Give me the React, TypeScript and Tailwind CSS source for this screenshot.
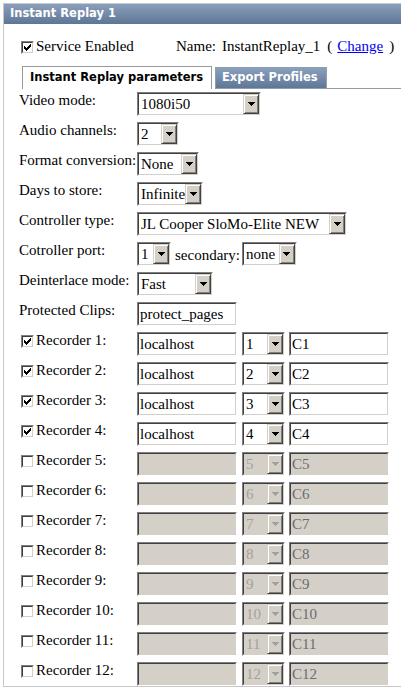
import type { ReactNode } from "react";

// classic windows-style form controls
function Inset({ w, disabled, children }: { w: string; disabled?: boolean; children?: ReactNode }) {
  return (
    <div className={`h-[24px] shrink-0 border border-t-[#808080] border-l-[#808080] border-r-white border-b-white ${w}`}>
      <div
        className={`flex h-full border border-t-[#404040] border-l-[#404040] border-r-[#d4d0c8] border-b-[#d4d0c8] ${
          disabled ? "bg-[#d4d0c8]" : "bg-white"
        }`}
      >
        {children}
      </div>
    </div>
  );
}

function DropButton({ disabled }: { disabled?: boolean }) {
  return (
    <div className="flex h-full w-[16px] shrink-0 items-center justify-center border border-t-[#d4d0c8] border-l-[#d4d0c8] border-r-[#404040] border-b-[#404040] bg-[#d4d0c8] shadow-[inset_1px_1px_0_#ffffff,inset_-1px_-1px_0_#808080]">
      <svg width="7" height="4" viewBox="0 0 7 4" shapeRendering="crispEdges">
        <path d="M0 0h7v1H0zM1 1h5v1H1zM2 2h3v1H2zM3 3h1v1H3z" fill={disabled ? "#a0a0a0" : "#000000"} />
      </svg>
    </div>
  );
}

function Select({ w, value, disabled }: { w: string; value: string; disabled?: boolean }) {
  return (
    <Inset w={w} disabled={disabled}>
      <span
        className={`flex-1 overflow-hidden whitespace-nowrap pl-[2px] pt-px leading-[19px] ${
          disabled ? "text-[#a3a29c]" : "text-black"
        }`}
      >
        {value}
      </span>
      <DropButton disabled={disabled} />
    </Inset>
  );
}

function TextInput({ w, value, disabled }: { w: string; value: string; disabled?: boolean }) {
  return (
    <Inset w={w} disabled={disabled}>
      <span
        className={`flex-1 overflow-hidden whitespace-nowrap pl-px pt-px leading-[19px] ${
          disabled ? "text-[#6b6b73]" : "text-black"
        }`}
      >
        {value}
      </span>
    </Inset>
  );
}

function Check({ checked }: { checked?: boolean }) {
  return (
    <div className="ml-[2px] mt-[3px] h-[13px] w-[13px] shrink-0 border border-t-[#808080] border-l-[#808080] border-r-white border-b-white">
      <div className="flex h-full w-full items-center justify-center border border-t-[#404040] border-l-[#404040] border-r-[#d4d0c8] border-b-[#d4d0c8] bg-white">
        {checked && (
          <svg width="7" height="7" viewBox="0 0 7 7" shapeRendering="crispEdges">
            <path
              d="M6 0h1v1H6zM5 1h2v1H5zM0 2h1v1H0zM4 2h3v1H4zM0 3h2v1H0zM3 3h3v1H3zM0 4h5v1H0zM1 5h3v1H1zM2 6h1v1H2z"
              fill="#000000"
            />
          </svg>
        )}
      </div>
    </div>
  );
}

function Row({ label, children }: { label: ReactNode; children: ReactNode }) {
  return (
    <div className="flex h-[24px] items-start">
      <div className="flex w-[118px] shrink-0 items-start whitespace-nowrap leading-[16px]">{label}</div>
      <div className="flex items-start">{children}</div>
    </div>
  );
}

const RECORDERS = Array.from({ length: 12 }, (_, i) => i + 1);

export default function App() {
  return (
    <div className="min-h-[689px] bg-white pl-[3px] pt-[3px] font-['Liberation_Serif','Times_New_Roman',serif] text-[15px] text-black">
      <div className="border-t border-l border-b border-[#c8c8c8]">
        {/* Title bar */}
        <div className="flex h-[20px] items-center bg-linear-to-b from-[#8a9fbb] to-[#5e7696] pl-[6px] font-['DejaVu_Sans',Verdana,sans-serif] text-[11.5px] font-bold text-white">
          Instant Replay 1
        </div>

        {/* Service row */}
        <div className="mt-[14px] flex items-start pl-[15px] leading-[16px]">
          <div className="flex w-[157px] shrink-0 items-start">
            <Check checked />
            <span className="ml-[2px]">Service Enabled</span>
          </div>
          <div className="flex items-start whitespace-nowrap">
            <span>Name:</span>
            <span className="ml-[6px]">InstantReplay_1</span>
            <span className="ml-[7px]">(</span>
            <a href="#" className="ml-[5px] text-[#0000ee] underline">
              Change
            </a>
            <span className="ml-[6px]">)</span>
          </div>
        </div>

        {/* Tabs */}
        <div className="mt-[12px] flex items-end pl-[18px] font-['DejaVu_Sans',Verdana,sans-serif] text-[11.5px] font-bold">
          <div className="flex h-[23px] w-[190px] items-center border-t border-l border-r border-[#9a9a9a] bg-white px-[7px] pb-px text-black">
            Instant Replay parameters
          </div>
          <div className="ml-[3px] flex h-[22px] w-[112px] items-center border border-[#8f9db0] bg-linear-to-b from-[#8aa0bc] to-[#5f7797] px-[6px] text-white">
            Export Profiles
          </div>
          <div className="h-px flex-1 bg-[#9a9a9a]" />
        </div>

        {/* Form */}
        <div className="mt-[3px] flex flex-col gap-[6px] pl-[15px]">
          <Row label="Video mode:">
            <Select w="w-[124px]" value="1080i50" />
          </Row>
          <Row label="Audio channels:">
            <Select w="w-[42px]" value="2" />
          </Row>
          <Row label="Format conversion:">
            <Select w="w-[62px]" value="None" />
          </Row>
          <Row label="Days to store:">
            <Select w="w-[66px]" value="Infinite" />
          </Row>
          <Row label="Controller type:">
            <Select w="w-[210px]" value="JL Cooper SloMo-Elite NEW" />
          </Row>
          <Row label="Cotroller port:">
            <Select w="w-[34px]" value="1" />
            <span className="ml-[4px] pt-[3px] leading-[20px]">secondary:</span>
            <div className="ml-[2px]">
              <Select w="w-[55px]" value="none" />
            </div>
          </Row>
          <Row label="Deinterlace mode:">
            <Select w="w-[76px]" value="Fast" />
          </Row>
          <Row label="Protected Clips:">
            <TextInput w="w-[100px]" value="protect_pages" />
          </Row>
          {RECORDERS.map((n) => {
            const on = n <= 4;
            return (
              <Row
                key={n}
                label={
                  <>
                    <Check checked={on} />
                    <span className="ml-[2px]">Recorder {n}:</span>
                  </>
                }
              >
                <TextInput w="w-[100px]" value={on ? "localhost" : ""} disabled={!on} />
                <div className="ml-[5px]">
                  <Select w="w-[43px]" value={String(n)} disabled={!on} />
                </div>
                <div className="ml-[4px]">
                  <TextInput w="w-[100px]" value={`C${n}`} disabled={!on} />
                </div>
              </Row>
            );
          })}
        </div>
      </div>
    </div>
  );
}
